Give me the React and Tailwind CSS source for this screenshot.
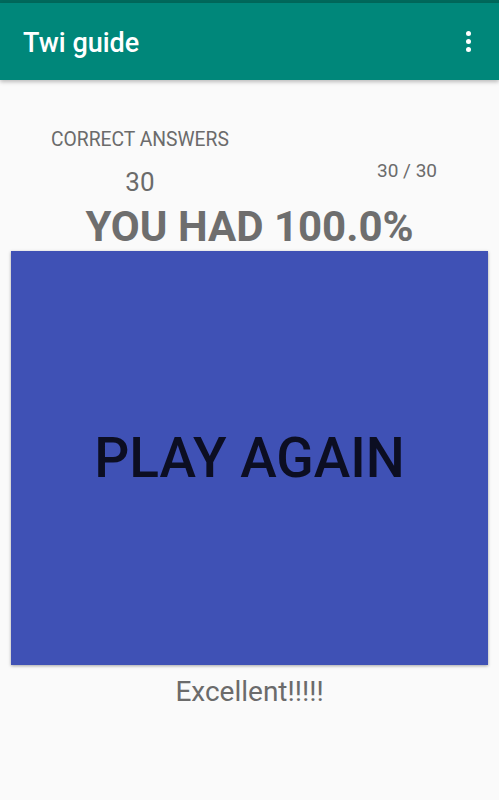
import React from 'react';

const App = () => {
    return (
        <div className="w-[499px] h-[800px] bg-[#fafafa] overflow-hidden" style={{ fontFamily: 'Roboto, "Liberation Sans", sans-serif' }}>
            {/* Status strip + toolbar */}
            <div className="h-[3px] bg-[#00695c]" />
            <header className="relative z-10 h-[77px] bg-[#00877a] flex items-center justify-between pl-[23px] pr-[28px] shadow-[0_2px_4px_rgba(0,0,0,0.25)]">
                <h1 className="text-white text-[27px] font-medium leading-none mt-[3px]">Twi guide</h1>
                <div className="flex flex-col gap-[3px] mt-[0px]">
                    <span className="w-[5px] h-[5px] rounded-full bg-white" />
                    <span className="w-[5px] h-[5px] rounded-full bg-white" />
                    <span className="w-[5px] h-[5px] rounded-full bg-white" />
                </div>
            </header>

            <main className="flex flex-col items-center">
                {/* Score block */}
                <div className="w-full flex justify-between pt-[48px]">
                    <div className="flex flex-col items-center ml-[51px]">
                        <span className="text-[19.3px] leading-[24px] text-[#6b6b6b]">CORRECT ANSWERS</span>
                        <span className="text-[26px] leading-[30px] text-[#6b6b6b] mt-[15px]">30</span>
                    </div>
                    <span className="text-[19px] leading-[24px] text-[#6b6b6b] mr-[62px] mt-[31px]">30 / 30</span>
                </div>

                <h2 className="text-[42px] font-bold leading-[48px] text-[#6e6e6e] mt-[6px]">YOU HAD 100.0%</h2>

                <button className="w-[477px] h-[414px] bg-[#3f51b5] shadow-[0_1px_3px_rgba(0,0,0,0.35)] flex items-center justify-center">
                    <span className="text-[55px] font-medium text-[#0c0e22] leading-none">PLAY AGAIN</span>
                </button>

                <p className="text-[28px] leading-[34px] text-[#6b6b6b] mt-[10px]">Excellent!!!!!</p>
            </main>
        </div>
    );
};

export default App;
